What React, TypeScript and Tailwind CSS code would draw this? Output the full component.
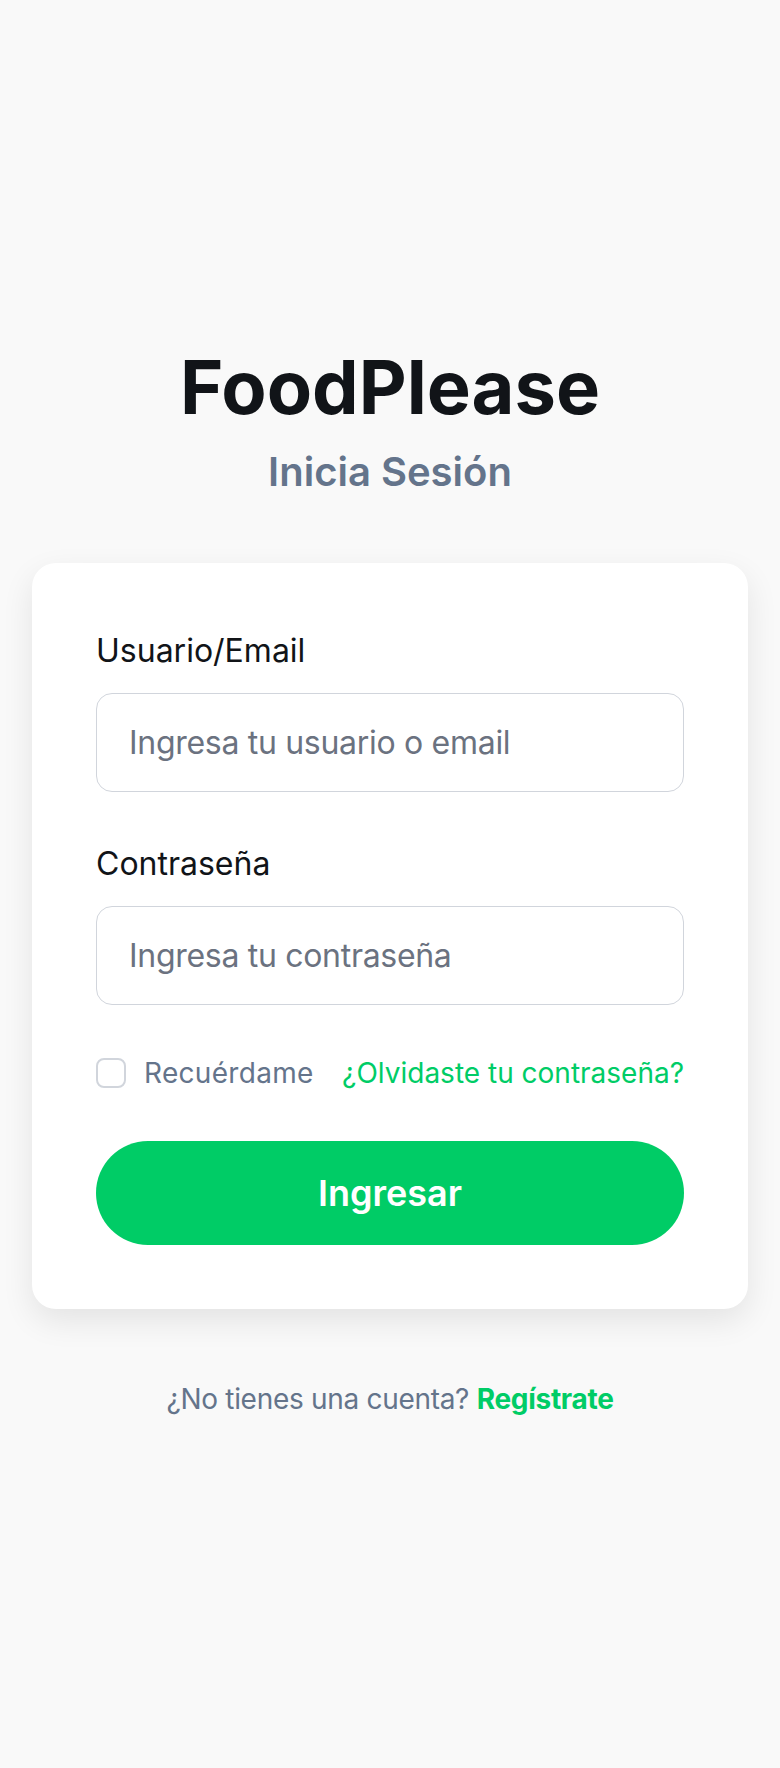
const App = () => {
    return (
        <div className="min-h-screen w-full bg-[#f9f9f9] flex flex-col justify-center px-8 font-['Inter',_sans-serif]">
            <h1 className="text-center text-[74px] leading-[74px] font-bold text-[#111418]">FoodPlease</h1>
            <h2 className="mt-[24px] text-center text-[40px] leading-[48px] font-semibold text-[#64748b]">Inicia Sesión</h2>

            <div className="mt-[67px] bg-white rounded-3xl p-16 shadow-[0_12px_32px_rgba(0,0,0,0.09)]">
                <label className="block text-[32px] leading-[48px] text-[#111418]">Usuario/Email</label>
                <input
                    type="text"
                    placeholder="Ingresa tu usuario o email"
                    className="mt-[18px] w-full border border-gray-300 rounded-2xl px-8 py-6 text-[32px] leading-[49px] tracking-[-0.3px] outline-none placeholder:text-[#6b7280]"
                />

                <label className="block mt-12 text-[32px] leading-[48px] text-[#111418]">Contraseña</label>
                <input
                    type="password"
                    placeholder="Ingresa tu contraseña"
                    className="mt-[18px] w-full border border-gray-300 rounded-2xl px-8 py-6 text-[32px] leading-[49px] tracking-[-0.3px] outline-none placeholder:text-[#6b7280]"
                />

                <div className="mt-12 h-10 flex items-center justify-between">
                    <label className="flex items-center gap-[18px]">
                        <input type="checkbox" className="appearance-none w-[30px] h-[30px] border-2 border-gray-300 rounded-lg bg-white" />
                        <span className="text-[28px] leading-10 tracking-[0.3px] text-[#64748b]">Recuérdame</span>
                    </label>
                    <a href="#" className="text-[28px] leading-10 text-[#00cc66]">¿Olvidaste tu contraseña?</a>
                </div>

                <button className="mt-12 w-full rounded-full bg-[#00cc66] py-6 text-[36px] leading-14 font-semibold text-white">
                    Ingresar
                </button>
            </div>

            <p className="mt-[70px] text-center text-[28px] leading-10 tracking-[-0.3px] text-[#64748b]">
                ¿No tienes una cuenta? <a href="#" className="font-bold text-[#00cc66]">Regístrate</a>
            </p>
        </div>
    );
};

export default App;
